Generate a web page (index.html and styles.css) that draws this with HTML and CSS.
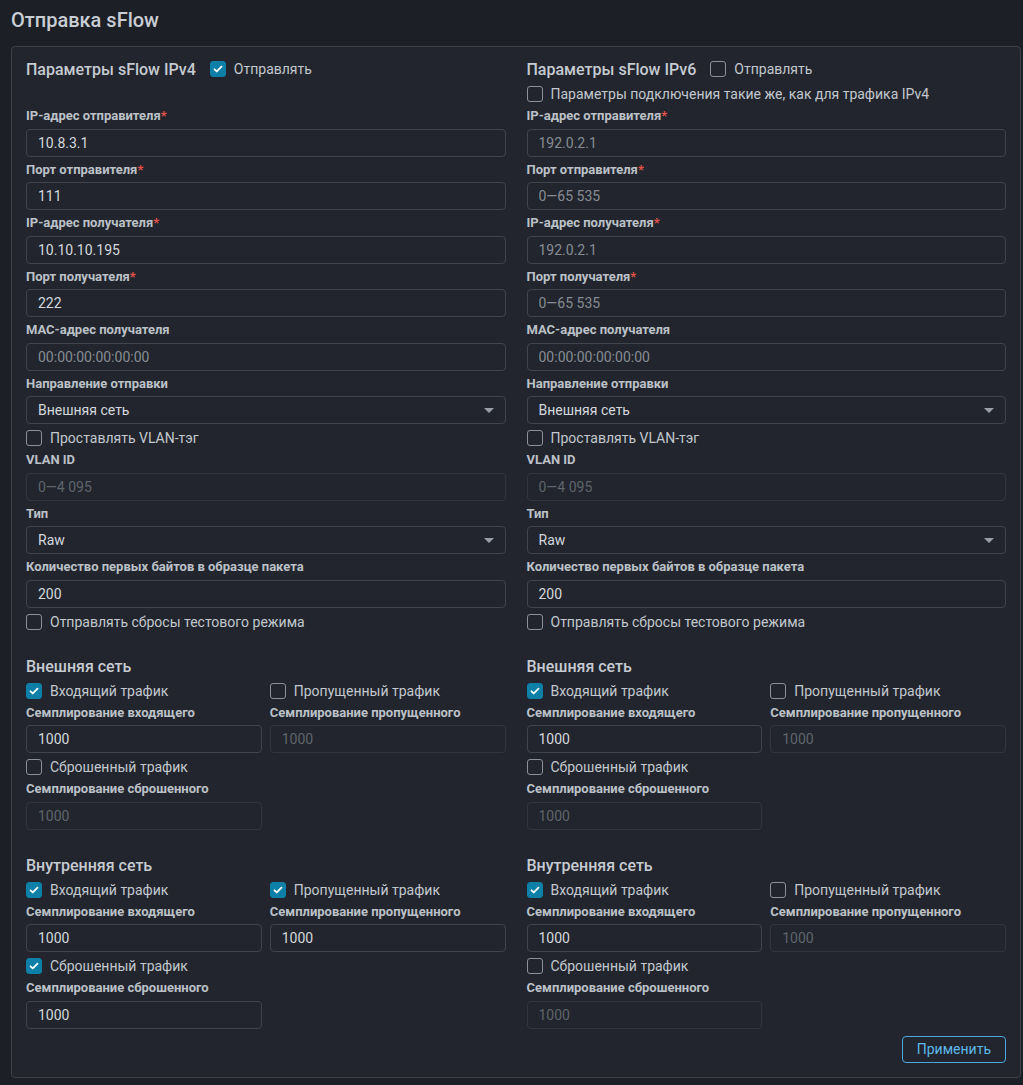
FILE: index.html
```html
<!DOCTYPE html>
<html lang="ru">
<head>
    <meta charset="UTF-8">
    <meta name="viewport" content="width=device-width, initial-scale=1.0">
    <title>Отправка sFlow</title>
    <link rel="stylesheet" href="styles.css">
</head>
<body>
    <h1 class="page-title">Отправка sFlow</h1>

    <form class="panel">
        <div class="columns">
            <!-- IPv4 -->
            <section class="col">
                <div class="col-head">
                    <div class="col-title">
                        <span>Параметры sFlow IPv4</span>
                        <label class="check"><span class="box on"><svg viewBox="0 0 16 16"><path d="M4 8.3l2.6 2.5L12 5.3"/></svg></span>Отправлять</label>
                    </div>
                </div>
                <div class="field">
                    <span class="field-label">IP-адрес отправителя<span class="req">*</span></span>
                    <input class="input" type="text" value="10.8.3.1">
                </div>
                <div class="field">
                    <span class="field-label">Порт отправителя<span class="req">*</span></span>
                    <input class="input" type="text" value="111">
                </div>
                <div class="field">
                    <span class="field-label">IP-адрес получателя<span class="req">*</span></span>
                    <input class="input" type="text" value="10.10.10.195">
                </div>
                <div class="field">
                    <span class="field-label">Порт получателя<span class="req">*</span></span>
                    <input class="input" type="text" value="222">
                </div>
                <div class="field">
                    <span class="field-label">MAC-адрес получателя</span>
                    <input class="input" type="text" placeholder="00:00:00:00:00:00">
                </div>
                <div class="field">
                    <span class="field-label">Направление отправки</span>
                    <div class="select">Внешняя сеть<span class="caret"></span></div>
                </div>
                <label class="check"><span class="box"></span>Проставлять VLAN-тэг</label>
                <div class="field">
                    <span class="field-label">VLAN ID</span>
                    <input class="input" type="text" placeholder="0—4 095" disabled>
                </div>
                <div class="field">
                    <span class="field-label">Тип</span>
                    <div class="select">Raw<span class="caret"></span></div>
                </div>
                <div class="field">
                    <span class="field-label">Количество первых байтов в образце пакета</span>
                    <input class="input" type="text" value="200">
                </div>
                <label class="check"><span class="box"></span>Отправлять сбросы тестового режима</label>

                <h3 class="section-title">Внешняя сеть</h3>
                <div class="net">
                    <label class="check"><span class="box on"><svg viewBox="0 0 16 16"><path d="M4 8.3l2.6 2.5L12 5.3"/></svg></span>Входящий трафик</label>
                    <label class="check"><span class="box"></span>Пропущенный трафик</label>
                    <div class="field">
                        <span class="field-label">Семплирование входящего</span>
                        <input class="input" type="text" value="1000">
                    </div>
                    <div class="field">
                        <span class="field-label">Семплирование пропущенного</span>
                        <input class="input" type="text" value="1000" disabled>
                    </div>
                    <label class="check"><span class="box"></span>Сброшенный трафик</label>
                    <div></div>
                    <div class="field">
                        <span class="field-label">Семплирование сброшенного</span>
                        <input class="input" type="text" value="1000" disabled>
                    </div>
                </div>

                <h3 class="section-title">Внутренняя сеть</h3>
                <div class="net">
                    <label class="check"><span class="box on"><svg viewBox="0 0 16 16"><path d="M4 8.3l2.6 2.5L12 5.3"/></svg></span>Входящий трафик</label>
                    <label class="check"><span class="box on"><svg viewBox="0 0 16 16"><path d="M4 8.3l2.6 2.5L12 5.3"/></svg></span>Пропущенный трафик</label>
                    <div class="field">
                        <span class="field-label">Семплирование входящего</span>
                        <input class="input" type="text" value="1000">
                    </div>
                    <div class="field">
                        <span class="field-label">Семплирование пропущенного</span>
                        <input class="input" type="text" value="1000">
                    </div>
                    <label class="check"><span class="box on"><svg viewBox="0 0 16 16"><path d="M4 8.3l2.6 2.5L12 5.3"/></svg></span>Сброшенный трафик</label>
                    <div></div>
                    <div class="field">
                        <span class="field-label">Семплирование сброшенного</span>
                        <input class="input" type="text" value="1000">
                    </div>
                </div>
            </section>

            <!-- IPv6 -->
            <section class="col">
                <div class="col-head">
                    <div class="col-title">
                        <span>Параметры sFlow IPv6</span>
                        <label class="check"><span class="box"></span>Отправлять</label>
                    </div>
                    <label class="check"><span class="box"></span>Параметры подключения такие же, как для трафика IPv4</label>
                </div>
                <div class="field">
                    <span class="field-label">IP-адрес отправителя<span class="req">*</span></span>
                    <input class="input" type="text" placeholder="192.0.2.1">
                </div>
                <div class="field">
                    <span class="field-label">Порт отправителя<span class="req">*</span></span>
                    <input class="input" type="text" placeholder="0—65 535">
                </div>
                <div class="field">
                    <span class="field-label">IP-адрес получателя<span class="req">*</span></span>
                    <input class="input" type="text" placeholder="192.0.2.1">
                </div>
                <div class="field">
                    <span class="field-label">Порт получателя<span class="req">*</span></span>
                    <input class="input" type="text" placeholder="0—65 535">
                </div>
                <div class="field">
                    <span class="field-label">MAC-адрес получателя</span>
                    <input class="input" type="text" placeholder="00:00:00:00:00:00">
                </div>
                <div class="field">
                    <span class="field-label">Направление отправки</span>
                    <div class="select">Внешняя сеть<span class="caret"></span></div>
                </div>
                <label class="check"><span class="box"></span>Проставлять VLAN-тэг</label>
                <div class="field">
                    <span class="field-label">VLAN ID</span>
                    <input class="input" type="text" placeholder="0—4 095" disabled>
                </div>
                <div class="field">
                    <span class="field-label">Тип</span>
                    <div class="select">Raw<span class="caret"></span></div>
                </div>
                <div class="field">
                    <span class="field-label">Количество первых байтов в образце пакета</span>
                    <input class="input" type="text" value="200">
                </div>
                <label class="check"><span class="box"></span>Отправлять сбросы тестового режима</label>

                <h3 class="section-title">Внешняя сеть</h3>
                <div class="net">
                    <label class="check"><span class="box on"><svg viewBox="0 0 16 16"><path d="M4 8.3l2.6 2.5L12 5.3"/></svg></span>Входящий трафик</label>
                    <label class="check"><span class="box"></span>Пропущенный трафик</label>
                    <div class="field">
                        <span class="field-label">Семплирование входящего</span>
                        <input class="input" type="text" value="1000">
                    </div>
                    <div class="field">
                        <span class="field-label">Семплирование пропущенного</span>
                        <input class="input" type="text" value="1000" disabled>
                    </div>
                    <label class="check"><span class="box"></span>Сброшенный трафик</label>
                    <div></div>
                    <div class="field">
                        <span class="field-label">Семплирование сброшенного</span>
                        <input class="input" type="text" value="1000" disabled>
                    </div>
                </div>

                <h3 class="section-title">Внутренняя сеть</h3>
                <div class="net">
                    <label class="check"><span class="box on"><svg viewBox="0 0 16 16"><path d="M4 8.3l2.6 2.5L12 5.3"/></svg></span>Входящий трафик</label>
                    <label class="check"><span class="box"></span>Пропущенный трафик</label>
                    <div class="field">
                        <span class="field-label">Семплирование входящего</span>
                        <input class="input" type="text" value="1000">
                    </div>
                    <div class="field">
                        <span class="field-label">Семплирование пропущенного</span>
                        <input class="input" type="text" value="1000" disabled>
                    </div>
                    <label class="check"><span class="box"></span>Сброшенный трафик</label>
                    <div></div>
                    <div class="field">
                        <span class="field-label">Семплирование сброшенного</span>
                        <input class="input" type="text" value="1000" disabled>
                    </div>
                </div>
            </section>
        </div>

        <div class="actions">
            <button type="button" class="btn">Применить</button>
        </div>
    </form>
</body>
</html>
```

FILE: styles.css
```css
/* общие */
* {
    margin: 0;
    padding: 0;
    box-sizing: border-box;
}

body {
    font-family: Roboto, "Noto Sans", sans-serif;
    background: #1c1f26;
    color: #c3c8cf;
    padding: 8px 2px 6px 11px;
}

.page-title {
    font-size: 20px;
    font-weight: 500;
    line-height: 24px;
    color: #c9ced5;
    margin-bottom: 14px;
}

/* панель с формой */
.panel {
    background: #22252d;
    border: 1px solid #3d414a;
    border-radius: 4px;
    padding: 11px 14px 14px;
}

.columns {
    display: grid;
    grid-template-columns: 1fr 1fr;
    column-gap: 21px;
}

.col {
    display: flex;
    flex-direction: column;
    gap: 5px;
}

.col-head {
    height: 45px;
    display: flex;
    flex-direction: column;
    gap: 5px;
}

.col-title {
    display: flex;
    align-items: center;
    gap: 14px;
    height: 22px;
    font-size: 16px;
    font-weight: 500;
    color: #c6cbd2;
}

.section-title {
    margin-top: 21px;
    font-size: 16px;
    line-height: 20px;
    font-weight: 500;
    color: #c6cbd2;
}

/* поля */
.field {
    display: flex;
    flex-direction: column;
    gap: 4px;
}

.field-label {
    font-size: 13px;
    line-height: 16.5px;
    font-weight: 700;
    color: #bcc1c8;
}

.req {
    color: #e5534b;
}

.input,
.select {
    height: 28px;
    width: 100%;
    border: 1px solid #40444d;
    border-radius: 4px;
    background: transparent;
    padding: 0 11px;
    font-family: inherit;
    font-size: 14px;
    color: #d4d8de;
    outline: none;
}

.input::placeholder {
    color: #878c94;
}

.input:disabled {
    border-color: #31353d;
    color: #5f646c;
}

.input:disabled::placeholder {
    color: #5f646c;
}

.select {
    display: flex;
    align-items: center;
    justify-content: space-between;
}

.caret {
    width: 0;
    height: 0;
    border-left: 5px solid transparent;
    border-right: 5px solid transparent;
    border-top: 5px solid #9a9fa7;
}

/* чекбоксы */
.check {
    display: flex;
    align-items: center;
    gap: 8px;
    height: 18px;
    font-size: 14px;
    font-weight: 400;
    color: #c3c8cf;
}

.box {
    width: 16px;
    height: 16px;
    border: 1px solid #8b9099;
    border-radius: 3px;
    flex-shrink: 0;
}

.box.on {
    background: #0e80a8;
    border-color: #0e80a8;
}

.box svg {
    display: block;
    width: 14px;
    height: 14px;
}

.box svg path {
    fill: none;
    stroke: #fff;
    stroke-width: 2;
    stroke-linecap: round;
    stroke-linejoin: round;
}

.net {
    display: grid;
    grid-template-columns: 1fr 1fr;
    gap: 5px 8px;
}

/* кнопка */
.actions {
    display: flex;
    justify-content: flex-end;
    margin-top: 7px;
}

.btn {
    height: 27px;
    padding: 0 14px;
    border: 1px solid #4aa8dc;
    border-radius: 4px;
    background: transparent;
    color: #5db8ea;
    font-family: inherit;
    font-size: 14px;
    cursor: pointer;
}
```
